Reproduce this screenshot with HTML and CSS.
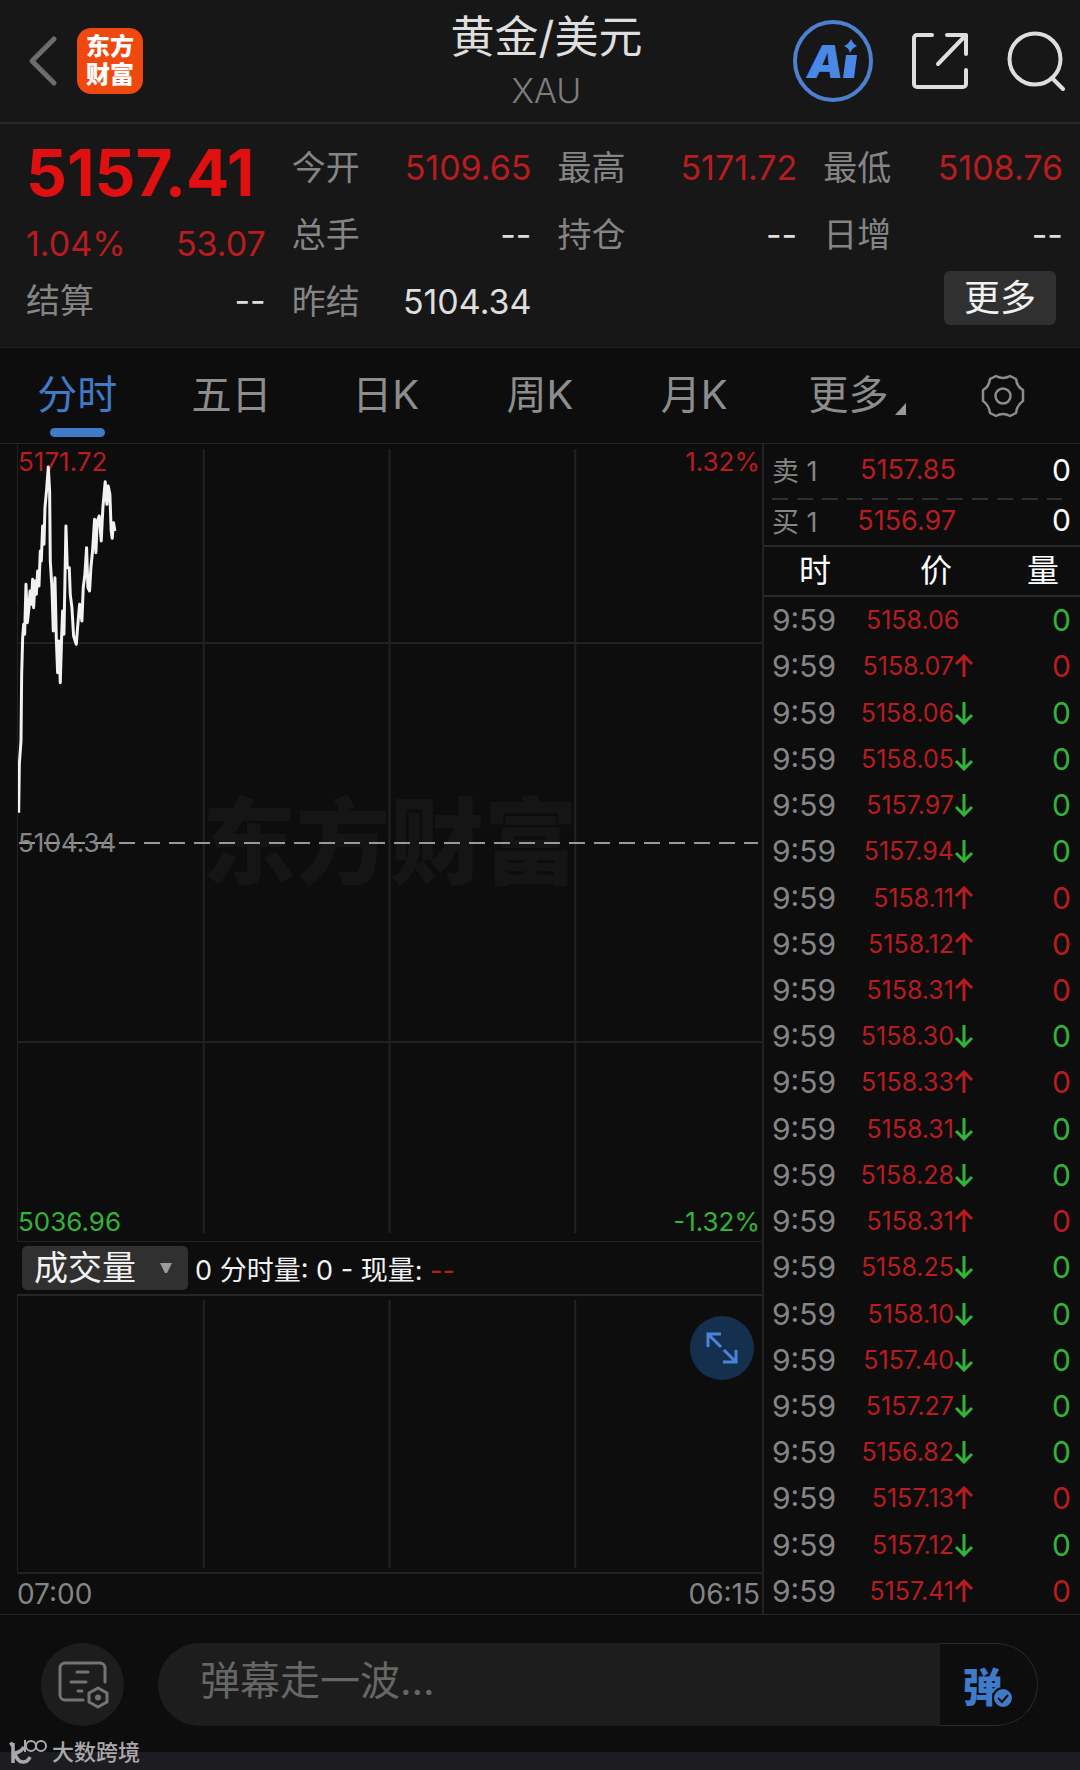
FILE: index.html
```html
<!DOCTYPE html>
<html lang="zh-CN">
  <head>
    <meta charset="UTF-8">
    <meta name="viewport" content="width=device-width, initial-scale=1">
    <title>黄金/美元 XAU</title>
    <link rel="stylesheet" href="styles.css">
  </head>
  <body>
    <header class="header">
      <div class="header-left">
        <a href="#" class="back" aria-label="返回">
          <svg width="30" height="52" viewBox="0 0 30 52"><path d="M26 4 4 26l22 22" fill="none" stroke="#6c6c6c" stroke-width="5" stroke-linecap="round" stroke-linejoin="round"/></svg>
        </a>
        <a href="#" class="logo">东方<br>财富</a>
      </div>
      <div class="header-title">
        <h1>黄金/美元</h1>
        <p>XAU</p>
      </div>
      <div class="header-right">
        <button type="button" aria-label="Ai">
          <svg width="80" height="82" viewBox="0 0 80 82">
            <ellipse cx="40" cy="41" rx="38" ry="39" fill="none" stroke="#4d80cf" stroke-width="4"/>
            <text x="14" y="58" class="ai-text">A</text>
            <path d="M53 35h11l-3 23H50z" fill="#4a88e8"/>
            <path d="M58 19q2 5 6 7-5 2-7 7-1-5-6-7 5-2 7-7z" fill="#4a88e8"/>
          </svg>
        </button>
        <button type="button" aria-label="分享">
          <svg width="58" height="58" viewBox="0 0 58 58" fill="none" stroke="#dedede" stroke-width="4" stroke-linecap="round" stroke-linejoin="round">
            <path d="M21 3H6a3 3 0 0 0-3 3v46a3 3 0 0 0 3 3h46a3 3 0 0 0 3-3V38"/>
            <path d="M36 3h19v19M55 3 27 32"/>
          </svg>
        </button>
        <button type="button" aria-label="搜索">
          <svg width="58" height="60" viewBox="0 0 58 60" fill="none" stroke="#dedede" stroke-width="4" stroke-linecap="round">
            <circle cx="28" cy="28" r="25.5"/>
            <path d="M45 47l11 11"/>
          </svg>
        </button>
      </div>
    </header>

    <section class="stats">
      <div class="col">
        <div class="price">5157.41</div>
        <div class="change"><span>1.04%</span><span>53.07</span></div>
        <div class="item last"><span class="label">结算</span><span>--</span></div>
      </div>
      <div class="col">
        <div class="item"><span class="label">今开</span><span class="red">5109.65</span></div>
        <div class="item"><span class="label">总手</span><span>--</span></div>
        <div class="item"><span class="label">昨结</span><span>5104.34</span></div>
      </div>
      <div class="col">
        <div class="item"><span class="label">最高</span><span class="red">5171.72</span></div>
        <div class="item"><span class="label">持仓</span><span>--</span></div>
      </div>
      <div class="col">
        <div class="item"><span class="label">最低</span><span class="red">5108.76</span></div>
        <div class="item"><span class="label">日增</span><span>--</span></div>
        <button type="button" class="more">更多</button>
      </div>
    </section>

    <nav class="tabs">
      <a href="#" class="current">分时</a>
      <a href="#">五日</a>
      <a href="#">日K</a>
      <a href="#">周K</a>
      <a href="#">月K</a>
      <a href="#" class="tab-more">更多<svg width="11" height="12" viewBox="0 0 11 12"><path d="M11 0v12H0z" fill="#9a9a9a"/></svg></a>
      <button type="button" aria-label="设置">
        <svg width="46" height="44" viewBox="0 0 46 44" fill="none" stroke="#8d8d8d" stroke-width="2.5" stroke-linejoin="round">
          <path d="M16 2q7 4 14 0l6 3q1 8 7 11v11q-6 4-7 12l-6 3q-7-4-14 0l-6-3q-1-8-7-12V16q6-3 7-11z"/>
          <circle cx="23" cy="22" r="7.5"/>
        </svg>
      </button>
    </nav>

    <main class="main">
      <section class="chart">
        <div class="plot">
          <div class="watermark">东方财富</div>
          <svg class="canvas" viewBox="51 9 2235 2391" preserveAspectRatio="none">
            <g class="grid">
              <path d="M609 24V2376M1167 24V2376M1725 24V2376M51 606H2286M51 1803H2286"/>
            </g>
            <path class="base" d="M54 1206H2274"/>
          </svg>
          <span class="tag top left red">5171.72</span>
          <span class="tag top right red">1.32%</span>
          <span class="tag middle left">5104.34</span>
          <span class="tag bottom left green">5036.96</span>
          <span class="tag bottom right green">-1.32%</span>
          <svg class="canvas" viewBox="51 9 2235 2391" preserveAspectRatio="none">
            <polyline class="line" points="53,1115 55,970 60,900 62,700 65,590 68,550 71,580 75,430 79,545 84,500 87,450 91,490 95,415 98,500 102,420 106,460 110,390 114,435 118,330 121,360 125,255 129,310 132,200 137,145 142,78 146,150 148,360 153,440 157,570 162,410 166,590 170,695 174,600 178,725 182,590 185,510 189,580 192,420 195,255 199,380 205,380 208,460 213,500 218,585 226,610 230,560 236,490 243,540 247,440 252,400 257,320 261,440 266,450 270,380 275,330 281,235 285,335 289,240 295,225 301,300 306,200 313,122 318,190 322,135 327,160 331,270 334,292 338,245 342,270"/>
          </svg>
        </div>
        <div class="vol-bar">
          <div class="select-box">
            <select aria-label="指标">
              <option>成交量</option>
              <option>MACD</option>
            </select>
            <svg width="12" height="11" viewBox="0 0 12 11"><path d="M0 0h12L7 10H5z" fill="#9c9c9c"/></svg>
          </div>
          <p>0 分时量: 0 - 现量: <span class="red">--</span></p>
        </div>
        <div class="plot volume">
          <svg class="canvas" viewBox="0 0 745 278" preserveAspectRatio="none">
            <g class="grid">
              <path d="M186 4V274M372 4V274M558 4V274"/>
            </g>
          </svg>
          <button type="button" class="expand" aria-label="全屏">
            <svg width="32" height="32" viewBox="0 0 32 32" fill="none" stroke="#4a84d8" stroke-width="3">
              <path d="M2 15V2h13M2 2l13 13M30 18v12H17M30 30 18 18"/>
            </svg>
          </button>
        </div>
        <div class="times"><span>07:00</span><span>06:15</span></div>
      </section>

      <aside class="side">
        <table class="orders">
          <tr><th>卖 1</th><td class="red">5157.85</td><td class="num">0</td></tr>
          <tr><th>买 1</th><td class="red">5156.97</td><td class="num">0</td></tr>
        </table>
        <table class="ticks">
          <thead>
            <tr><th>时</th><th>价</th><th>量</th></tr>
          </thead>
          <tbody id="ticks"></tbody>
        </table>
      </aside>
    </main>

    <footer class="footer">
      <button type="button" class="setting" aria-label="弹幕设置">
        <svg width="52" height="48" viewBox="0 0 52 48" fill="none" stroke="#747474" stroke-width="3" stroke-linecap="round" stroke-linejoin="round">
          <path d="M26 39H8a5 5 0 0 1-5-5V7a5 5 0 0 1 5-5h35a5 5 0 0 1 5 5v14"/>
          <path d="M20 11h11M14 21h15M21 30h4"/>
          <path d="M41 27l9 5v9l-9 5-9-5v-9z"/>
          <circle cx="41" cy="36.500" r="1.500" fill="#747474"/>
        </svg>
      </button>
      <div class="danmu">
        <input type="text" placeholder="弹幕走一波..." aria-label="弹幕">
        <button type="button">弹
          <svg width="22" height="22" viewBox="0 0 22 22"><circle cx="11" cy="11" r="10" fill="#3f7bc8" stroke="#0d0d0d" stroke-width="2"/><path d="M6 11l4 4 6-7" fill="none" stroke="#0d0d0d" stroke-width="2"/></svg>
        </button>
      </div>
    </footer>
    <div class="strip"></div>
    <div class="source">
      <svg width="38" height="26" viewBox="0 0 38 26" fill="none" stroke="#a9a9ac">
        <path d="M4 4v20M1 6l3-2M15 8Q12 13 6 14q2 9 8 9 5 0 7-5" stroke-width="3.500"/>
        <path d="M16 1v12" stroke-width="2"/>
        <circle cx="22" cy="7" r="5" stroke-width="2"/>
        <circle cx="32" cy="7" r="5" stroke-width="2"/>
      </svg>
      <span>大数跨境</span>
    </div>

    <script>
      var up = '<svg class="arrow red" viewBox="0 0 20 24"><path d="M10 23V2M2 10l8-8 8 8"/></svg>';
      var down = '<svg class="arrow green" viewBox="0 0 20 24"><path d="M10 1v21M2 14l8 8 8-8"/></svg>';

      //价格, 方向: 1涨 -1跌 0平
      var list = [
        ['5158.06', 0], ['5158.07', 1], ['5158.06', -1], ['5158.05', -1],
        ['5157.97', -1], ['5157.94', -1], ['5158.11', 1], ['5158.12', 1],
        ['5158.31', 1], ['5158.30', -1], ['5158.33', 1], ['5158.31', -1],
        ['5158.28', -1], ['5158.31', 1], ['5158.25', -1], ['5158.10', -1],
        ['5157.40', -1], ['5157.27', -1], ['5156.82', -1], ['5157.13', 1],
        ['5157.12', -1], ['5157.41', 1]
      ];
      var html = '';
      for (var i = 0; i < list.length; i++) {
        var dir = list[i][1];
        html += '<tr><td class="time">9:59</td>' +
          '<td class="deal red"><div>' + list[i][0] + '<i>' + (dir > 0 ? up : dir < 0 ? down : '') + '</i></div></td>' +
          '<td class="num ' + (dir > 0 ? 'red' : 'green') + '">0</td></tr>';
      }
      document.getElementById('ticks').innerHTML = html;
    </script>
  </body>
</html>
```
FILE: styles.css
```css
* { box-sizing: border-box; }
body, h1, p { margin: 0; }
body { background: #0d0d0d; color: #dedede; font-family: Inter, "Noto Sans CJK SC", sans-serif; font-size: 28px; }
a { color: inherit; text-decoration: none; }
button { padding: 0; border: 0; background: none; color: inherit; font: inherit; cursor: pointer; }
svg { display: block; }
.red { color: #b81c1f; }
.green { color: #31b437; }

/* header */
.header { display: grid; grid-template-columns: 1fr auto 1fr; align-items: center; height: 124px; padding: 0 15px 0 28px; background: #171717; border-bottom: 2px solid #282828; }
.header-left { display: flex; align-items: center; gap: 19px; }
.logo { display: flex; align-items: center; justify-content: center; width: 66px; height: 66px; border-radius: 14px; background: #f0490f; color: #fff; font-size: 24px; line-height: 28px; font-weight: 900; }
.header-title { text-align: center; }
.header-title h1 { font-size: 44px; line-height: 60px; font-weight: 400; }
.header-title p { color: #7d7d7d; font-size: 34px; line-height: 48px; font-weight: 300; }
.header-right { display: flex; align-items: center; justify-content: flex-end; gap: 38px; }
.ai-text { fill: #4a88e8; font-size: 46px; font-weight: 900; font-style: italic; }

/* stats */
.stats { display: grid; grid-template-columns: repeat(4, 1fr); column-gap: 26px; padding: 10px 17px 12px 26px; background: #171717; border-bottom: 1px solid #202020; }
.col { display: flex; flex-direction: column; }
.item, .change { display: flex; justify-content: space-between; font-size: 34px; line-height: 67px; }
.label { color: #858585; }
.item.last { line-height: 48px; }
.price { color: #e01010; font-size: 64px; line-height: 77px; font-weight: 700; }
.change { color: #b81c1f; line-height: 66px; }
.more { align-self: flex-end; width: 112px; height: 54px; margin: 3px 7px 0 0; border-radius: 6px; background: #303030; color: #f2f2f2; font-size: 36px; line-height: 54px; }

/* tabs */
.tabs { display: grid; grid-template-columns: repeat(7, 1fr); height: 96px; border-bottom: 1px solid #262626; color: #8d8d8d; font-size: 40px; line-height: 94px; text-align: center; }
.tabs a { position: relative; }
.tabs button { display: flex; align-items: center; justify-content: center; }
.tabs .current { color: #3f7bc8; }
.tabs .current::after { content: ""; position: absolute; left: 50%; bottom: 6px; width: 55px; height: 9px; margin-left: -27px; border-radius: 5px; background: #3f7bc8; }
.tab-more svg { position: absolute; right: 20px; bottom: 28px; }

/* chart */
.main { display: flex; }
.chart { flex: 1; padding-left: 17px; }
.plot { position: relative; height: 798px; border: solid #222; border-width: 0 0 1px 1px; }
.canvas { position: absolute; left: 0; top: 0; width: 100%; height: 100%; }
.canvas path, .canvas polyline { fill: none; vector-effect: non-scaling-stroke; }
.grid { stroke: #222; stroke-width: 2; }
.base { stroke: #999; stroke-width: 2; stroke-dasharray: 16 9; }
.line { stroke: #f2f2f2; stroke-width: 3; stroke-linejoin: round; }
.watermark { position: absolute; left: 0; right: 0; top: 50%; margin-top: -70px; color: #151515; font-size: 94px; line-height: 140px; font-weight: 900; text-align: center; }
.tag { position: absolute; font-size: 26px; line-height: 36px; }
.tag.left { left: 0; }
.tag.right { right: 2px; }
.tag.top { top: 0; }
.tag.bottom { bottom: 1px; }
.tag.middle { top: 50%; margin-top: -18px; color: #858585; }
.vol-bar { display: flex; align-items: center; gap: 7px; height: 54px; padding-left: 5px; border-bottom: 2px solid #262626; color: #f2f2f2; }
.vol-bar p { font-size: 27px; white-space: nowrap; }
.select-box { position: relative; }
.select-box select { display: block; appearance: none; width: 166px; height: 44px; padding: 0 0 0 12px; border: 0; border-radius: 5px; background: #303030; color: #f2f2f2; font: inherit; font-size: 34px; line-height: 44px; }
.select-box svg { position: absolute; right: 16px; top: 17px; pointer-events: none; }
.volume { height: 278px; border-bottom-width: 2px; }
.expand { position: absolute; right: 8px; top: 20px; display: flex; align-items: center; justify-content: center; width: 64px; height: 64px; border-radius: 50%; background: #15304e; }
.times { display: flex; justify-content: space-between; padding-right: 2px; color: #858585; line-height: 40px; }

/* side */
.side { display: flex; flex-direction: column; width: 318px; border-left: 2px solid #222; }
table { width: 100%; border-collapse: collapse; table-layout: fixed; }
td, th { padding: 0; font-weight: 400; text-align: left; }
.orders { border-bottom: 2px solid #2a2a2a; font-size: 27px; }
.orders tr { height: 51px; }
.orders tr + tr { background: repeating-linear-gradient(90deg, #2e2e2e 0 16px, transparent 16px 25px) 8px 3px / 290px 2px no-repeat; }
.orders th { width: 80px; padding-left: 8px; color: #858585; }
.orders td.red { width: 112px; text-align: right; }
.orders .num { color: #fff; }
.num { padding-right: 9px; font-size: 30px; text-align: right; }
.ticks { flex: 1; }
.ticks thead tr { height: 49px; border-bottom: 2px solid #2a2a2a; }
.ticks th { color: #fff; font-size: 32px; line-height: 40px; text-align: center; }
.ticks th:nth-child(1) { width: 102px; }
.ticks th:nth-child(2) { width: 140px; }
.ticks td { line-height: 40px; }
.time { padding-left: 8px; color: #858585; font-size: 30px; }
.deal { font-size: 25px; }
.deal div { display: flex; align-items: center; justify-content: flex-end; padding-right: 32px; }
.deal i { width: 20px; }
.arrow { width: 20px; height: 24px; fill: none; stroke: currentColor; stroke-width: 3; }

/* footer */
.footer { display: flex; align-items: center; gap: 34px; height: 138px; padding: 2px 42px 0 41px; border-top: 1px solid #262626; }
.setting { display: flex; align-items: center; justify-content: center; width: 83px; height: 83px; border-radius: 50%; background: #1d1d1d; }
.danmu { flex: 1; display: flex; height: 83px; border-radius: 42px; overflow: hidden; background: #1d1d1d; }
.danmu input { flex: 1; min-width: 0; padding: 0 0 8px 42px; border: 0; outline: 0; background: none; color: #dedede; font: inherit; font-size: 40px; }
.danmu input::placeholder { color: #666; }
.danmu button { position: relative; width: 98px; border: 1px solid #2a2a2a; border-left: 0; border-radius: 0 42px 42px 0; background: #0d0d0d; color: #3f7bc8; padding-right: 12px; font-size: 40px; font-weight: 900; }
.danmu button svg { position: absolute; right: 23px; bottom: 16px; }
.strip { height: 20px; background: #1d1d21; }
.source { position: absolute; left: 9px; top: 1736px; display: flex; align-items: center; gap: 5px; color: #a9a9ac; font-size: 22px; line-height: 32px; font-weight: 500; }
```
